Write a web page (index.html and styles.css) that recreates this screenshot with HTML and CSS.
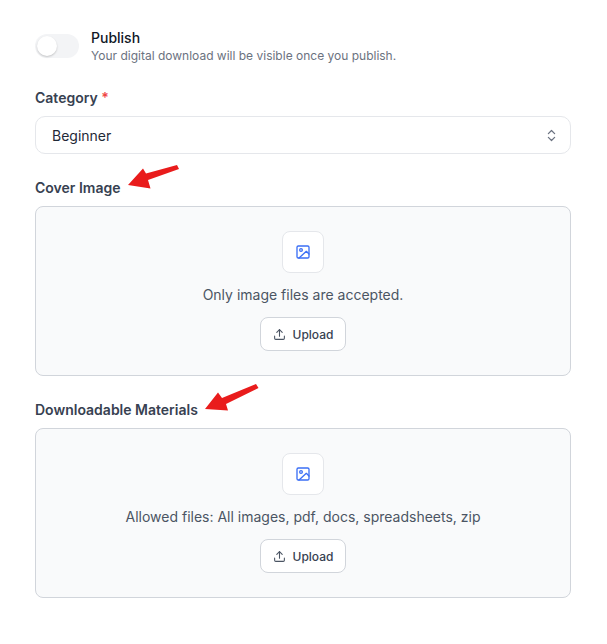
FILE: index.html
```html
<!DOCTYPE html>
<html lang="en">
<head>
<meta charset="utf-8">
<title>Publish settings</title>
<link rel="stylesheet" href="styles.css">
</head>
<body>
<main class="form">
  <div class="publish">
    <span class="toggle"><span class="knob"></span></span>
    <div class="publish-text">
      <div class="publish-title">Publish</div>
      <div class="publish-sub">Your digital download will be visible once you publish.</div>
    </div>
  </div>

  <section class="field category">
    <div class="label">Category <span class="req">*</span></div>
    <div class="select">
      <span>Beginner</span>
      <svg class="chev" viewBox="0 0 24 24" width="15" height="15" fill="none" stroke="#6b7280" stroke-width="2" stroke-linecap="round" stroke-linejoin="round"><path d="M7 9l5-5 5 5"/><path d="M7 15l5 5 5-5"/></svg>
    </div>
  </section>

  <section class="field cover">
    <div class="label">Cover Image</div>
    <div class="drop">
      <span class="icon-box">
        <svg viewBox="0 0 24 24" width="16" height="16" fill="none" stroke="#3b6ff5" stroke-width="2" stroke-linecap="round" stroke-linejoin="round"><rect x="3" y="3" width="18" height="18" rx="2"/><circle cx="9" cy="9" r="2"/><path d="M21 15l-4-4L6 21"/></svg>
      </span>
      <p class="hint">Only image files are accepted.</p>
      <button class="upload" type="button">
        <svg viewBox="0 0 24 24" width="13" height="13" fill="none" stroke="#4b5563" stroke-width="2" stroke-linecap="round" stroke-linejoin="round"><path d="M21 15v4a2 2 0 0 1-2 2H5a2 2 0 0 1-2-2v-4"/><path d="M17 8l-5-5-5 5"/><path d="M12 3v12"/></svg>
        Upload
      </button>
    </div>
  </section>

  <section class="field materials">
    <div class="label">Downloadable Materials</div>
    <div class="drop">
      <span class="icon-box">
        <svg viewBox="0 0 24 24" width="16" height="16" fill="none" stroke="#3b6ff5" stroke-width="2" stroke-linecap="round" stroke-linejoin="round"><rect x="3" y="3" width="18" height="18" rx="2"/><circle cx="9" cy="9" r="2"/><path d="M21 15l-4-4L6 21"/></svg>
      </span>
      <p class="hint">Allowed files: All images, pdf, docs, spreadsheets, zip</p>
      <button class="upload" type="button">
        <svg viewBox="0 0 24 24" width="13" height="13" fill="none" stroke="#4b5563" stroke-width="2" stroke-linecap="round" stroke-linejoin="round"><path d="M21 15v4a2 2 0 0 1-2 2H5a2 2 0 0 1-2-2v-4"/><path d="M17 8l-5-5-5 5"/><path d="M12 3v12"/></svg>
        Upload
      </button>
    </div>
  </section>
</main>
<svg class="arrows" width="607" height="644" viewBox="0 0 607 644">
  <g fill="#e91c1c" stroke="none">
    <path d="M128 185L143 168.500L146 173.500L177 165L179 169L148 180L150.500 188.500Z"/>
    <path d="M205 409L218 392.500L222 398L256 384L258.500 388L226 404L228 410.500Z"/>
  </g>
</svg>
</body>
</html>
```
FILE: styles.css
```css
* { box-sizing: border-box; }
html, body { margin: 0; padding: 0; background: #fff; }
body {
  width: 607px;
  height: 644px;
  position: relative;
  overflow: hidden;
  font-family: Inter, "Liberation Sans", sans-serif;
}
.form { padding: 29px 36px 0 35px; }
.publish { display: flex; gap: 12px; align-items: flex-start; }
.toggle {
  width: 44px; height: 24px; margin-top: 5px;
  background: #f3f4f6; border-radius: 12px;
  padding: 2px; display: block; flex: none;
}
.knob {
  display: block; width: 20px; height: 20px; border-radius: 50%;
  background: #fff; box-shadow: 0 1px 2px rgba(0,0,0,.2);
}
.publish-title { font-size: 14px; line-height: 17px; font-weight: 500; color: #111827; }
.publish-sub { font-size: 12px; line-height: 17px; margin-top: 1px; color: #6b7280; }
.label { font-size: 14px; line-height: 20px; font-weight: 600; color: #374151; }
.req { color: #ef4444; }
.category { margin-top: 24px; }
.select {
  margin-top: 8px; height: 38px; padding: 0 11px 0 16px;
  border: 1px solid #e5e7eb; border-radius: 10px;
  display: flex; align-items: center; justify-content: space-between;
  font-size: 14px; color: #1f2937;
}
.cover { margin-top: 24px; }
.materials { margin-top: 24px; }
.drop {
  margin-top: 8px; height: 170px; padding-top: 24px;
  background: #f9fafb; border: 1px solid #d1d5db; border-radius: 8px;
  display: flex; flex-direction: column; align-items: center;
}
.icon-box {
  width: 42px; height: 42px; background: #fff;
  border: 1px solid #e5e7eb; border-radius: 8px;
  display: flex; align-items: center; justify-content: center;
}
.hint { margin: 13px 0 0; font-size: 14px; line-height: 17px; color: #4b5563; }
.upload {
  margin-top: 14px; height: 34px; width: 86px; padding: 0;
  background: #fff; border: 1px solid #d1d5db; border-radius: 8px;
  display: flex; align-items: center; justify-content: center; gap: 7px;
  font: 500 12px Inter, "Liberation Sans", sans-serif; color: #374151;
}
.arrows { position: absolute; left: 0; top: 0; pointer-events: none; }
```
